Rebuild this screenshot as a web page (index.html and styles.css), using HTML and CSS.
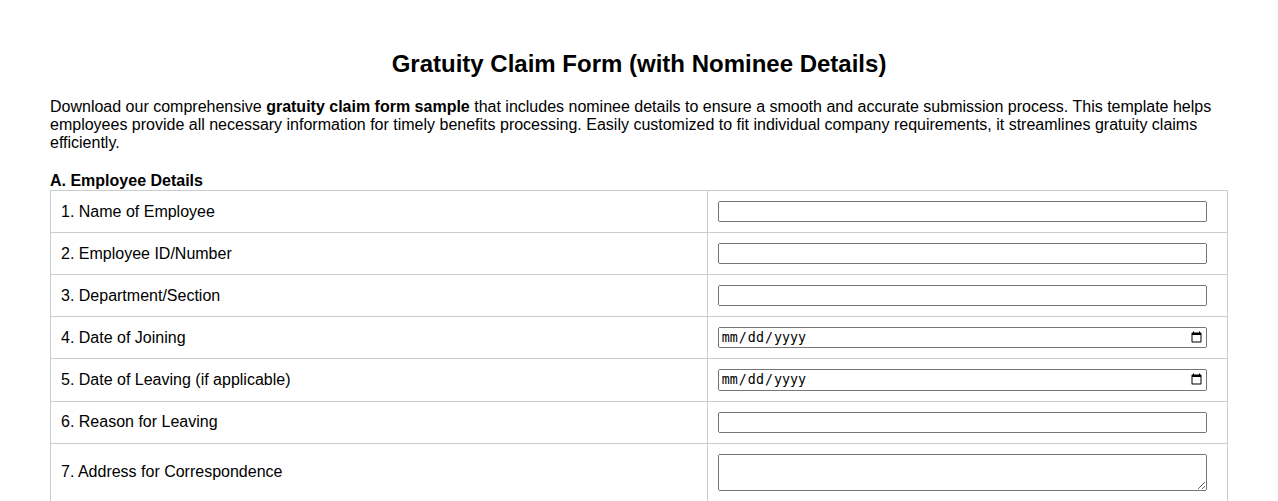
FILE: index.html
```html
<!DOCTYPE html>
<html lang="en">
<head>
    <meta charset="UTF-8">
    <meta name="viewport" content="width=device-width, initial-scale=1.0">
    <title>Gratuity Claim Form</title>
    <link rel="stylesheet" href="styles.css">
</head>
<body>
<div class="page">
    <h2 class="title">Gratuity Claim Form (with Nominee Details)</h2>
    <p class="intro">Download our comprehensive <strong>gratuity claim form sample</strong> that includes nominee details to ensure a smooth and accurate submission process. This template helps employees provide all necessary information for timely benefits processing. Easily customized to fit individual company requirements, it streamlines gratuity claims efficiently.</p>

    <form name="gratuityForm">
        <h3 class="section-title">A. Employee Details</h3>
        <table class="form-table">
            <tr>
                <td class="label">1. Name of Employee</td>
                <td class="field"><input type="text" name="emp_name"></td>
            </tr>
            <tr>
                <td class="label">2. Employee ID/Number</td>
                <td class="field"><input type="text" name="emp_id"></td>
            </tr>
            <tr>
                <td class="label">3. Department/Section</td>
                <td class="field"><input type="text" name="department"></td>
            </tr>
            <tr>
                <td class="label">4. Date of Joining</td>
                <td class="field"><input type="date" name="doj"></td>
            </tr>
            <tr>
                <td class="label">5. Date of Leaving (if applicable)</td>
                <td class="field"><input type="date" name="dol"></td>
            </tr>
            <tr>
                <td class="label">6. Reason for Leaving</td>
                <td class="field"><input type="text" name="reason"></td>
            </tr>
            <tr>
                <td class="label">7. Address for Correspondence</td>
                <td class="field"><textarea name="address" rows="2"></textarea></td>
            </tr>
        </table>
    </form>
</div>
</body>
</html>
```

FILE: styles.css
```css
body {
    margin: 0;
    font-family: "Liberation Sans", Arial, sans-serif;
    color: #000;
    background: #fff;
}

.page {
    padding: 30px 50px;
}

.title {
    text-align: center;
    font-size: 24px;
    margin: 20px 0;
}

.intro {
    font-size: 16px;
    margin: 0 0 20px;
}

.section-title {
    font-size: 16px;
    margin: 0;
}

.form-table {
    width: 100%;
    border-collapse: collapse;
}

.form-table td {
    border: 1px solid #ccc;
    padding: 10px;
    font-size: 16px;
    vertical-align: middle;
}

.form-table .label {
    width: 55.8%;
}

.field input,
.field textarea {
    display: block;
    box-sizing: border-box;
    width: 98%;
    margin: 0;
}

.field textarea {
    height: 37px;
}
```
